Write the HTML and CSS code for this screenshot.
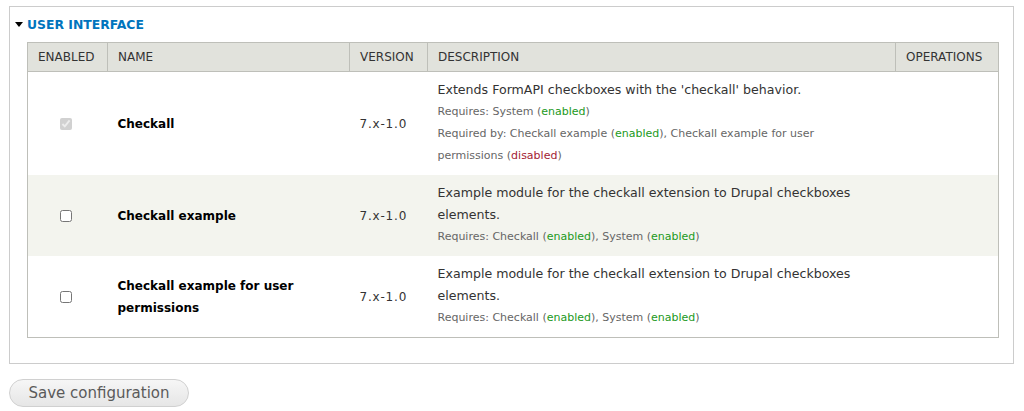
FILE: index.html
```html
<!DOCTYPE html>
<html lang="en">

<head>
    <meta charset="UTF-8">
    <title>Modules</title>
    <link rel="stylesheet" href="styles.css">
</head>

<body>
    <form class="modules">
        <fieldset class="group">
            <div class="legend"><span class="arrow"></span>User interface</div>
            <table class="module-table">
                <colgroup>
                    <col class="c-enabled">
                    <col class="c-name">
                    <col class="c-version">
                    <col class="c-desc">
                    <col class="c-ops">
                </colgroup>
                <thead>
                    <tr>
                        <th>Enabled</th>
                        <th>Name</th>
                        <th>Version</th>
                        <th>Description</th>
                        <th>Operations</th>
                    </tr>
                </thead>
                <tbody>
                    <tr class="odd">
                        <td class="check"><input type="checkbox" checked disabled></td>
                        <td class="name">Checkall</td>
                        <td class="version">7.x-1.0</td>
                        <td class="desc">
                            <div class="text">Extends FormAPI checkboxes with the 'checkall' behavior.</div>
                            <div class="req">Requires: System (<span class="on">enabled</span>)</div>
                            <div class="req">Required by: Checkall example (<span class="on">enabled</span>), Checkall example for user permissions (<span class="off">disabled</span>)</div>
                        </td>
                        <td></td>
                    </tr>
                    <tr class="even">
                        <td class="check"><input type="checkbox"></td>
                        <td class="name">Checkall example</td>
                        <td class="version">7.x-1.0</td>
                        <td class="desc">
                            <div class="text">Example module for the checkall extension to Drupal checkboxes elements.</div>
                            <div class="req">Requires: Checkall (<span class="on">enabled</span>), System (<span class="on">enabled</span>)</div>
                        </td>
                        <td></td>
                    </tr>
                    <tr class="odd">
                        <td class="check"><input type="checkbox"></td>
                        <td class="name">Checkall example for user permissions</td>
                        <td class="version">7.x-1.0</td>
                        <td class="desc">
                            <div class="text">Example module for the checkall extension to Drupal checkboxes elements.</div>
                            <div class="req">Requires: Checkall (<span class="on">enabled</span>), System (<span class="on">enabled</span>)</div>
                        </td>
                        <td></td>
                    </tr>
                </tbody>
            </table>
        </fieldset>
        <button type="button" class="save">Save configuration</button>
    </form>
</body>

</html>
```

FILE: styles.css
```css
* {
    margin: 0px;
    padding: 0px;
    box-sizing: border-box;
}

body {
    background-color: #fff;
    font-family: "DejaVu Sans", Verdana, sans-serif;
    font-size: 12px;
    color: #333;
    padding: 6px 10px 0 9px;
}

.group {
    border: 1px solid #ccc;
    padding: 7px 14px 25px 17px;
}

.legend {
    display: flex;
    align-items: center;
    margin-left: -12px;
    height: 20px;
    font-size: 12.4px;
    font-weight: bold;
    color: #0074bd;
    text-transform: uppercase;
    margin-bottom: 8px;
}

.legend .arrow {
    width: 0;
    height: 0;
    border-left: 4px solid transparent;
    border-right: 4px solid transparent;
    border-top: 5px solid #000;
    margin-right: 4px;
}

.module-table {
    width: 100%;
    border-collapse: collapse;
    table-layout: fixed;
    border: 1px solid #bebfb9;
}

.c-enabled { width: 80px; }
.c-name { width: 242px; }
.c-version { width: 78px; }
.c-ops { width: 103px; }

.module-table th {
    height: 29px;
    background-color: #e1e2dc;
    border: 1px solid #bebfb9;
    border-top: 0;
    font-weight: normal;
    text-align: left;
    text-transform: uppercase;
    padding: 0 10px;
    color: #333;
}

.module-table td {
    vertical-align: middle;
    padding: 0 10px;
}

.module-table tr.odd {
    background-color: #fff;
}

.module-table tr.even {
    background-color: #f3f4ee;
}

.module-table td.check {
    text-align: center;
    padding: 0 12px 0 8px;
}

.module-table td.check input {
    width: 12px;
    height: 12px;
    vertical-align: middle;
}

.module-table td.name {
    font-weight: bold;
    color: #000;
    line-height: 22px;
}

.module-table td.version {
    color: #333;
    letter-spacing: 0.8px;
}

.module-table td.desc {
    padding: 7px 30px 8px 10px;
    line-height: 22px;
}

.desc .text {
    font-size: 12.6px;
    color: #333;
}

.desc .req {
    font-size: 11px;
    color: #666;
}

.desc .on {
    color: #229922;
}

.desc .off {
    color: #a31b34;
}

.save {
    margin-top: 15px;
    width: 180px;
    height: 28px;
    border: 1px solid #d0d0d0;
    border-radius: 14px;
    background: linear-gradient(#f6f6f6, #e6e6e6);
    font-family: "DejaVu Sans", Verdana, sans-serif;
    font-size: 15px;
    color: #5a5a5a;
    cursor: pointer;
}
```
